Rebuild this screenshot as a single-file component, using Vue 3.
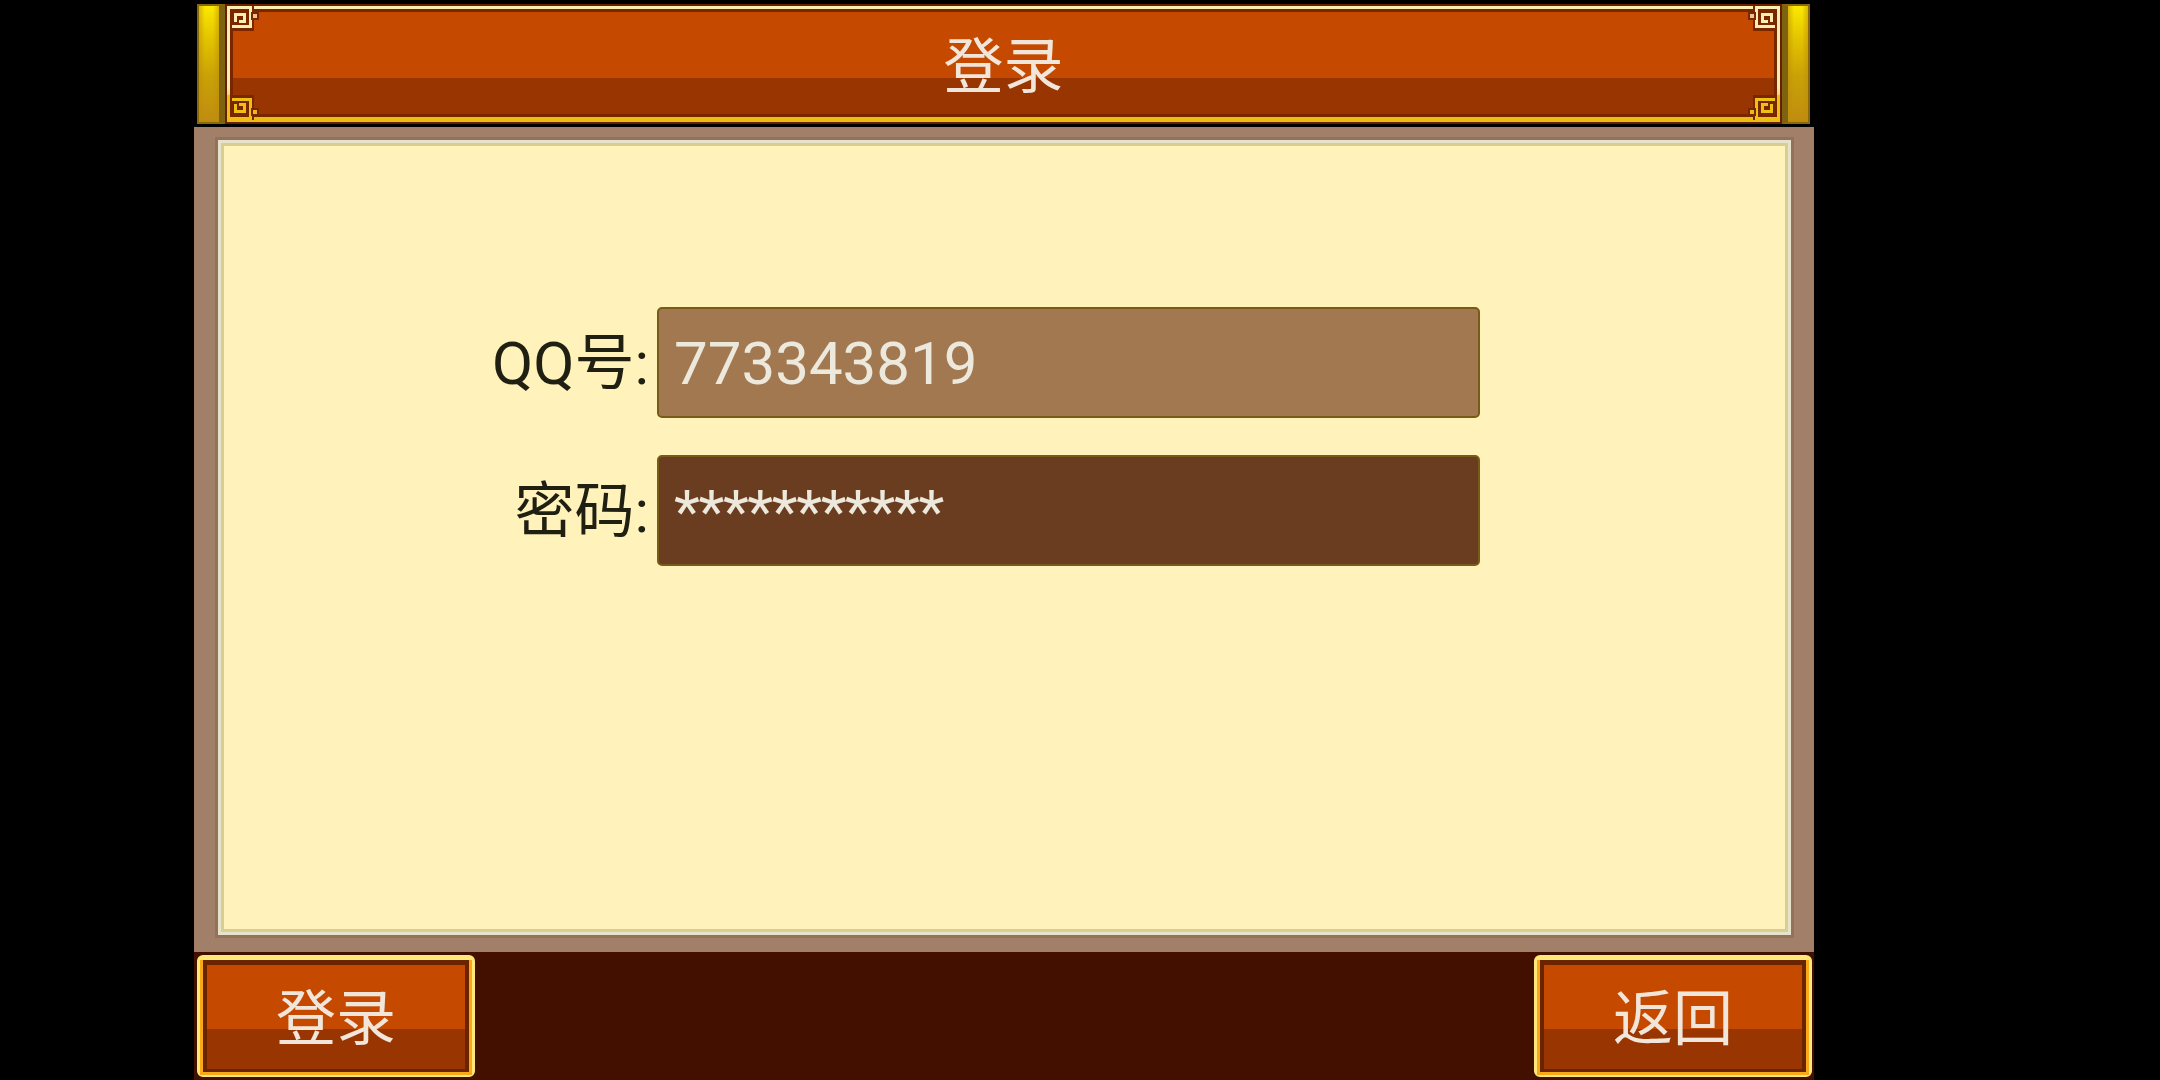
<script setup>
const fields = [
  { label: 'QQ号:', value: '773343819', cls: 'light' },
  { label: '密码:', value: '***********', cls: 'dark' },
]
const corners = ['tl', 'tr', 'bl', 'br']
</script>

<template>
  <div class="screen">
    <div class="game">
      <header class="header">
        <div class="pillar"></div>
        <div class="banner">
          <svg v-for="c in corners" :key="c" class="corner" :class="c" viewBox="0 0 27 25">
            <path class="key-shadow" d="M0 0H27V25H0Z" />
            <path class="key-line" d="M1.5 25V1.5H23.5V20.5H5" />
            <path class="key-line" d="M12 15.5H17.5V8.5H8.5V16" />
          </svg>
          <span class="dot tl-dot"></span>
          <span class="dot tr-dot"></span>
          <span class="dot bl-dot"></span>
          <span class="dot br-dot"></span>
          <h1 class="title">登录</h1>
        </div>
        <div class="pillar"></div>
      </header>

      <main class="panel">
        <div class="frame">
          <form class="form" @submit.prevent>
            <div v-for="f in fields" :key="f.label" class="row">
              <label class="label">{{ f.label }}</label>
              <div class="field" :class="f.cls">{{ f.value }}</div>
            </div>
          </form>
        </div>
      </main>

      <footer class="footer">
        <button class="btn" type="button"><span class="btn-text">登录</span></button>
        <button class="btn" type="button"><span class="btn-text">返回</span></button>
      </footer>
    </div>
  </div>
</template>

<style>
html, body { margin: 0; background: #000; }
</style>

<style scoped>
.screen {
  width: 2160px;
  height: 1080px;
  background: #000;
  overflow: hidden;
  padding-left: 194px;
  box-sizing: border-box;
  font-family: Roboto, "Noto Sans CJK SC", sans-serif;
}
.game {
  width: 1620px;
  height: 1080px;
  display: flex;
  flex-direction: column;
}
.header {
  height: 127px;
  display: flex;
  align-items: flex-start;
  padding: 4px 4px 0 3px;
  box-sizing: border-box;
  flex: none;
}
.pillar {
  width: 28px;
  height: 120px;
  flex: none;
  box-sizing: border-box;
  background:
    linear-gradient(90deg, rgba(190,140,10,0.55) 0, rgba(190,140,10,0) 30%, rgba(190,140,10,0) 70%, rgba(190,140,10,0.55) 100%),
    linear-gradient(180deg, #fbe900 0%, #e3c400 28%, #c9a206 60%, #c08c10 100%);
  border: 2px solid #8a6a08;
  border-right: 6px solid #7d6210;
}
.pillar:last-child {
  border-right: 2px solid #8a6a08;
  border-left: 6px solid #7d6210;
}
.banner {
  position: relative;
  flex: 1;
  height: 120px;
  box-sizing: border-box;
  border: 2px solid #6a2000;
  background: linear-gradient(180deg, #c54a00 0 72px, #993500 72px);
  display: flex;
  justify-content: center;
  align-items: center;
}
.banner::before {
  content: "";
  position: absolute;
  inset: 0;
  border-style: solid;
  border-width: 3px 3px 5px 3px;
  border-image: linear-gradient(180deg, #fbeeb0 0, #fbeeb0 72%, #f0b410 88%, #e8c010 100%) 1;
}
.banner::after {
  content: "";
  position: absolute;
  inset: 3px 3px 5px 3px;
  border: 3px solid #7a2600;
}
.title {
  margin: 0;
  font-family: "Noto Sans CJK SC", sans-serif;
  font-size: 60px;
  font-weight: 400;
  line-height: 1;
  color: #f2e6da;
  position: relative;
  top: -2px;
}
.corner {
  position: absolute;
  width: 27px;
  height: 25px;
  z-index: 1;
}
.corner.tl { left: 0; top: 0; }
.corner.tr { right: 0; top: 0; transform: scaleX(-1); }
.corner.bl { left: 0; bottom: 2px; transform: scaleY(-1); }
.corner.br { right: 0; bottom: 2px; transform: scale(-1, -1); }
.key-shadow { fill: #7a2600; }
.key-line { fill: none; stroke: #fbeeb0; stroke-width: 3; }
.corner.bl .key-line, .corner.br .key-line { stroke: #eec014; }
.dot {
  position: absolute;
  width: 4px;
  height: 4px;
  z-index: 1;
  background: #f0c090;
  box-shadow: 0 0 0 2px #7a2600;
}
.tl-dot { left: 26px; top: 8px; }
.tr-dot { right: 26px; top: 8px; }
.bl-dot { left: 26px; bottom: 8px; background: #e9bb14; }
.br-dot { right: 26px; bottom: 8px; background: #e9bb14; }
.panel {
  height: 825px;
  flex: none;
  box-sizing: border-box;
  padding: 10px 20px 14px 21px;
  background: #a27f68;
}
.frame {
  height: 100%;
  box-sizing: border-box;
  border: 3px solid #927258;
  background: #fff2bb;
  box-shadow: inset 0 0 0 3px #e6e2cc, inset 0 0 0 6px #d6cf90;
}
.form {
  display: flex;
  flex-direction: column;
  gap: 37px;
  padding-top: 167px;
}
.row {
  display: flex;
  align-items: center;
  height: 111px;
}
.label {
  width: 431px;
  text-align: right;
  font-family: Roboto, "Noto Sans CJK SC", sans-serif;
  font-size: 60px;
  line-height: 1;
  color: #1f1f12;
  flex: none;
  padding-top: 3px;
}
.field {
  margin-left: 8px;
  width: 823px;
  height: 111px;
  box-sizing: border-box;
  border: 2px solid #7a5a18;
  border-radius: 5px;
  font-size: 60px;
  line-height: 110px;
  padding-left: 15px;
  color: #ece8dc;
}
.field.light { background: #a27850; }
.field.dark { background: #6b3d20; line-height: 109px; letter-spacing: -1.4px; }
.footer {
  flex: 1;
  background: #431000;
  display: flex;
  justify-content: space-between;
  align-items: center;
  padding: 0 2px 0 3px;
}
.btn {
  width: 278px;
  height: 122px;
  box-sizing: border-box;
  padding: 0 0 7px;
  border-style: solid;
  border-width: 5px 3px 2px 3px;
  border-color: #ffe878;
  border-radius: 6px;
  background: linear-gradient(180deg, #c54a00 0 69px, #993500 69px);
  background-origin: padding-box;
  background-clip: padding-box;
  font-family: "Noto Sans CJK SC", sans-serif;
  font-size: 60px;
  line-height: 1;
  color: #f2e6da;
  position: relative;
}
.btn::before {
  content: "";
  position: absolute;
  inset: 0;
  border-style: solid;
  border-width: 0 3px 3px 3px;
  border-color: #f8a818;
}
.btn::after {
  content: "";
  position: absolute;
  inset: 0 3px 3px 3px;
  border-style: solid;
  border-width: 5px 4px 3px 4px;
  border-color: #6b2400;
}
.btn-text {
  position: relative;
  z-index: 1;
}
</style>
